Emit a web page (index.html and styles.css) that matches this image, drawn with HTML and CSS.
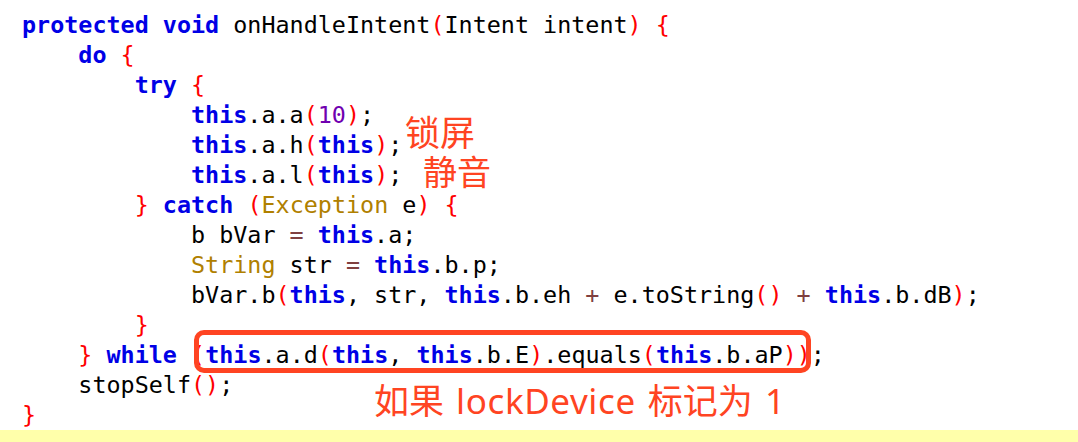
FILE: index.html
```html
<!DOCTYPE html>
<html>
<head>
<meta charset="utf-8">
<link rel="stylesheet" href="styles.css">
</head>
<body>
<div class="editor">
<div class="code">
<div class="line"><span class="kw">protected</span> <span class="kw">void</span> onHandleIntent<span class="p">(</span>Intent intent<span class="p">)</span> <span class="p">{</span></div>
<div class="line">    <span class="kw">do</span> <span class="p">{</span></div>
<div class="line">        <span class="kw">try</span> <span class="p">{</span></div>
<div class="line">            <span class="kw">this</span>.a.a<span class="p">(</span><span class="num">10</span><span class="p">)</span>;</div>
<div class="line">            <span class="kw">this</span>.a.h<span class="p">(</span><span class="kw">this</span><span class="p">)</span>;</div>
<div class="line">            <span class="kw">this</span>.a.l<span class="p">(</span><span class="kw">this</span><span class="p">)</span>;</div>
<div class="line">        <span class="p">}</span> <span class="kw">catch</span> <span class="p">(</span><span class="ty">Exception</span> e<span class="p">)</span> <span class="p">{</span></div>
<div class="line">            b bVar <span class="op">=</span> <span class="kw">this</span>.a;</div>
<div class="line">            <span class="ty">String</span> str <span class="op">=</span> <span class="kw">this</span>.b.p;</div>
<div class="line">            bVar.b<span class="p">(</span><span class="kw">this</span>, str, <span class="kw">this</span>.b.eh <span class="op">+</span> e.toString<span class="p">()</span> <span class="op">+</span> <span class="kw">this</span>.b.dB<span class="p">)</span>;</div>
<div class="line">        <span class="p">}</span></div>
<div class="line">    <span class="p">}</span> <span class="kw">while</span> <span class="p">(</span><span class="kw">this</span>.a.d<span class="p">(</span><span class="kw">this</span>, <span class="kw">this</span>.b.E<span class="p">)</span>.equals<span class="p">(</span><span class="kw">this</span>.b.aP<span class="p">))</span>;</div>
<div class="line">    stopSelf<span class="p">()</span>;</div>
<div class="line"><span class="p">}</span></div>
<div class="line current"> </div>
</div>
<div class="note note-lock">锁屏</div>
<div class="note note-mute">静音</div>
<div class="highlight-box"></div>
<div class="note note-flag">如果 <span class="latin">lockDevice</span> 标记为 <span class="latin">1</span></div>
</div>
</body>
</html>
```
FILE: styles.css
```css
html, body {
  margin: 0;
  padding: 0;
  background: #ffffff;
  overflow: hidden;
}

.editor {
  position: relative;
  width: 1078px;
  height: 442px;
  overflow: hidden;
}

.code {
  padding-top: 10px;
  font-family: "DejaVu Sans Mono", monospace;
  font-size: 23.4px;
  line-height: 30px;
  color: #000000;
}

.line {
  white-space: pre;
  padding-left: 22px;
  height: 30px;
}

.line.current {
  background: #ffffaa;
}

.kw {
  color: #0000e6;
  font-weight: bold;
}

.p {
  color: #ff0000;
}

.num {
  color: #7000b0;
}

.ty {
  color: #b08000;
}

.op {
  color: #804040;
}

.note {
  position: absolute;
  font-family: "Noto Sans", "Noto Sans CJK SC", sans-serif;
  color: #ff4422;
  font-size: 34px;
  line-height: 1;
  white-space: nowrap;
}

.note-lock {
  left: 405px;
  top: 115px;
  font-size: 35px;
}

.note-mute {
  left: 423px;
  top: 155px;
}

.note-flag {
  left: 374px;
  top: 383px;
  font-size: 35px;
  word-spacing: 3px;
}

.latin {
  letter-spacing: 0.6px;
}

.highlight-box {
  position: absolute;
  left: 194px;
  top: 330px;
  width: 607px;
  height: 33px;
  border: 5px solid #ff4422;
  border-radius: 10px;
}
```
